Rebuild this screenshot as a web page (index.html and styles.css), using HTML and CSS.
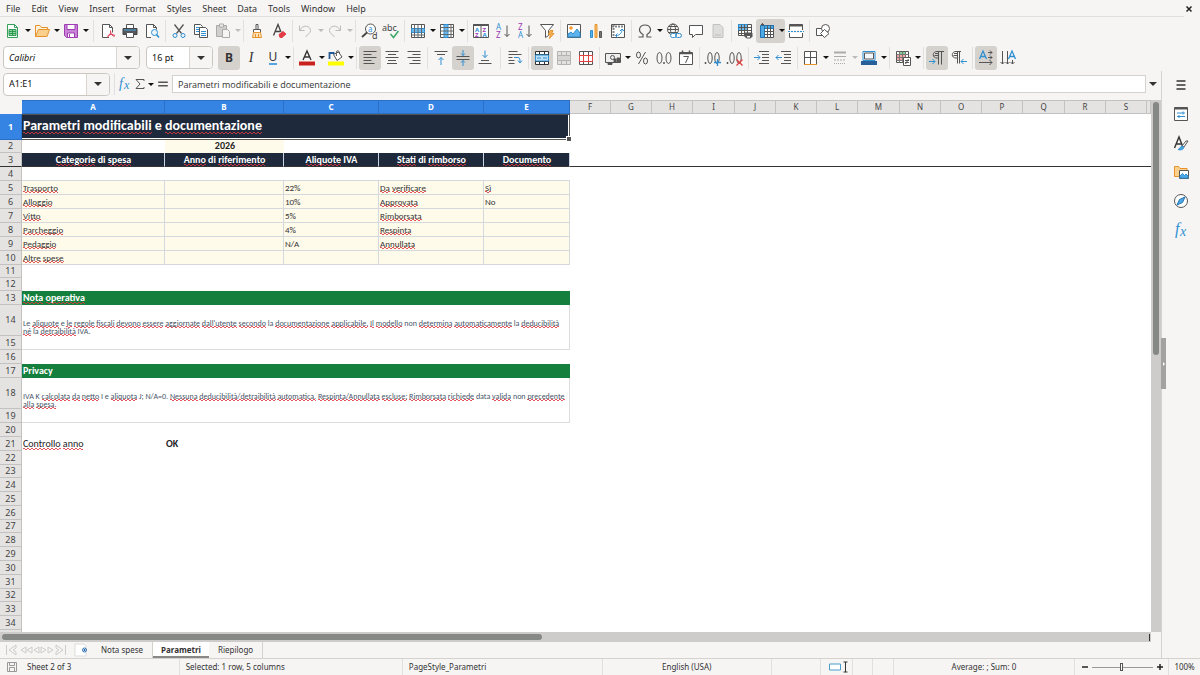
FILE: index.html
```html
<!DOCTYPE html>
<html lang="en">
<head>
<meta charset="utf-8">
<title>Parametri</title>
<link rel="stylesheet" href="styles.css">
</head>
<body>
<header class="menubar">
<nav class="menus"><button>File</button><button>Edit</button><button>View</button><button>Insert</button><button>Format</button><button>Styles</button><button>Sheet</button><button>Data</button><button>Tools</button><button>Window</button><button>Help</button></nav>
<button class="close" aria-label="Close"><svg viewBox="0 0 8 8"><path d="M1.500 1.500l5 5M6.500 1.500l-5 5" stroke="#222" stroke-width="1.500"/></svg></button>
</header>

<div class="toolbar">
<button class="tb" aria-label="New"><svg viewBox="0 0 18 18"><path d="M3.500 2.500h7l3 3v10h-10z" fill="#fff" stroke="#35a05a"/><path d="M10.500 2.500v3h3" stroke="#35a05a"/><path d="M5 7.500h7v6H5zM5 9.500h7M5 11.500h7M8.500 7.500v6" fill="#8fd6a4" stroke="#2f9a52"/></svg></button><button class="dd" aria-label="New options"></button>
<button class="tb" aria-label="Open"><svg viewBox="0 0 18 18"><path d="M2.500 14.500v-11h4.500l1.500 2h6v2.500" fill="#fdf0d8" stroke="#e6932c"/><path d="M2.500 14.500l3-7h11l-2.500 7z" fill="#fbd08c" stroke="#e6932c"/></svg></button><button class="dd" aria-label="Open options"></button>
<button class="tb" aria-label="Save"><svg viewBox="0 0 18 18"><path d="M2.500 2.500h13v13h-11l-2-2z" fill="#c883d6" stroke="#a03db5"/><path d="M5 2.500h8v5H5zM5.500 11h7v4.500h-7z" fill="#fff" stroke="#a03db5"/><path d="M7.500 12v3" stroke="#a03db5"/></svg></button><button class="dd" aria-label="Save options"></button>
<i class="sep wide"></i>
<button class="tb" aria-label="Export as PDF"><svg viewBox="0 0 18 18"><path d="M10 15.500H3.500v-13h7l3 3v5" fill="#fff"/><path d="M10.500 2.500v3h3"/><path d="M8 15.500c3-2 4-4.500 3.500-7M8.500 14c2-2 5-2 7.500-.500M11.500 9c0 3 2 5 4 5.500" stroke="#e0415a"/></svg></button>
<button class="tb" aria-label="Print"><svg viewBox="0 0 18 18"><path d="M5.500 6.500v-4h7v4" fill="#fff"/><path d="M2 6.500h14v6H2z" fill="#53585c" stroke="#444"/><path d="M3 8h12" stroke="#4da3e0"/><path d="M5.500 10.500h7v5h-7z" fill="#fff"/></svg></button>
<button class="tb" aria-label="Print preview"><svg viewBox="0 0 18 18"><path d="M8 15.500H3.500v-13h7l3 3v2" fill="#fff"/><path d="M10.500 2.500v3h3"/><circle cx="11.500" cy="10.500" r="3" fill="#eaf5fc" stroke="#2f8fd3"/><path d="M13.500 12.500l2.500 3" stroke="#2f8fd3" stroke-width="1.500"/></svg></button>
<i class="sep"></i>
<button class="tb" aria-label="Cut"><svg viewBox="0 0 18 18"><path d="M4.500 2.500l7 9M13.500 2.500l-7 9" stroke-width="1.300"/><circle cx="5" cy="13.500" r="2" stroke="#2f8fd3"/><circle cx="13" cy="13.500" r="2" stroke="#2f8fd3"/></svg></button>
<button class="tb" aria-label="Copy"><svg viewBox="0 0 18 18"><path d="M2.500 2.500h6l2 2v8h-8z" fill="#fff"/><path d="M4 5.500h4M4 7.500h3M4 9.500h3" stroke="#2f8fd3"/><path d="M7.500 5.500h6l2 2v8h-8z" fill="#fff"/><path d="M9 9.500h5M9 11.500h5M9 13.500h5" stroke="#2f8fd3"/></svg></button>
<button class="tb off" aria-label="Paste"><svg viewBox="0 0 18 18"><path d="M2.500 3.500h10v11h-10z" fill="#d0cfcd" stroke="#aaa"/><path d="M5.500 2h4v3h-4z" fill="#eee" stroke="#aaa"/><path d="M8.500 7.500h5l2 2v6h-7z" fill="#f5f5f5" stroke="#aaa"/></svg></button><button class="dd off" aria-label="Paste options"></button>
<i class="sep"></i>
<button class="tb" aria-label="Clone formatting"><svg viewBox="0 0 18 18"><path d="M8 2.500h2v5H8zM5.500 7.500h7v3h-7z" fill="#fff"/><path d="M5.500 10.500h7l1 5h-9zM7.500 12v3M10.500 12v3" fill="#fce2b8" stroke="#e6932c"/></svg></button>
<button class="tb" aria-label="Clear formatting"><svg viewBox="0 0 18 18"><path d="M3.500 13.500l4.500-11 3 7.500M5 9.500h5" stroke="#444" stroke-width="1.300"/><path d="M9 12.500l4-3 3 2.500-4 3.500h-2z" fill="#e23c46" stroke="#e23c46"/></svg></button>
<i class="sep"></i>
<button class="tb off" aria-label="Undo"><svg viewBox="0 0 18 18"><path d="M2.500 3.500v5h5M2.500 8.500c4-7 11-4.500 11 0 0 3-3 3.500-5 6.500" stroke="#bbb"/></svg></button><button class="dd off" aria-label="Undo options"></button>
<button class="tb off" aria-label="Redo"><svg viewBox="0 0 18 18"><path d="M14.500 3.500v5h-5M14.500 8.500c-4-7-11-4.500-11 0 0 3 3 3.500 5 6.500" stroke="#bbb"/></svg></button><button class="dd off" aria-label="Redo options"></button>
<i class="sep"></i>
<button class="tb" aria-label="Find and replace"><svg viewBox="0 0 18 18"><circle cx="10.500" cy="7" r="5" fill="#fff"/><path d="M7 10.500l-5 4.500" stroke="#444" stroke-width="1.800"/><text x="8" y="9.500" font-size="8" fill="#2f8fd3">a</text><text x="12" y="17" font-size="9" fill="#444">d</text></svg></button>
<button class="tb" aria-label="Spelling"><svg viewBox="0 0 18 18"><text x="0" y="8.500" font-size="9" fill="#444">abc</text><path d="M8.500 12l3 3.500 5-6.500" stroke="#3aa964" stroke-width="1.500"/></svg></button>
<i class="sep"></i>
<button class="tb" aria-label="Row"><svg viewBox="0 0 18 18"><path d="M2.500 2.500h13v13h-13z" fill="#fff"/><path d="M2.500 6.500h13v4h-13z" fill="#6cb9ed" stroke="#2f8fd3"/><path d="M2.500 13h13M5.500 2.500v13M9 2.500v13M12.500 2.500v13" stroke="#666"/></svg></button><button class="dd" aria-label="Row options"></button>
<button class="tb" aria-label="Column"><svg viewBox="0 0 18 18"><path d="M2.500 2.500h13v13h-13z" fill="#fff"/><path d="M6 2.500h4v13H6z" fill="#6cb9ed" stroke="#2f8fd3"/><path d="M2.500 5.500h13M2.500 9h13M2.500 12.500h13M13 2.500v13" stroke="#666"/></svg></button><button class="dd" aria-label="Column options"></button>
<i class="sep"></i>
<button class="tb" aria-label="Sort"><svg viewBox="0 0 18 18"><path d="M1.500 2.500h15v13h-15zM9 2.500v13" fill="#fff"/><path d="M1.500 3h15" stroke-width="2"/><g font-size="6" font-weight="bold"><text x="3" y="9.500" fill="#2f8fd3">A</text><text x="3" y="15" fill="#9a3bb0">Z</text><text x="10.500" y="9.500" fill="#9a3bb0">Z</text><text x="10.500" y="15" fill="#2f8fd3">A</text></g></svg></button>
<button class="tb" aria-label="Sort ascending"><svg viewBox="0 0 18 18"><g font-size="8"><text x="2" y="8" fill="#2f8fd3">A</text><text x="2" y="16" fill="#9a3bb0">Z</text></g><path d="M13 3.500v11M10.500 12l2.500 2.500L15.500 12"/></svg></button>
<button class="tb" aria-label="Sort descending"><svg viewBox="0 0 18 18"><g font-size="8"><text x="2" y="8" fill="#9a3bb0">Z</text><text x="2" y="16" fill="#2f8fd3">A</text></g><path d="M13 3.500v11M10.500 12l2.500 2.500L15.500 12"/></svg></button>
<button class="tb" aria-label="AutoFilter"><svg viewBox="0 0 18 18"><path d="M2.500 2.500h13l-5 6v5l-3 2v-7z" fill="#fff"/><path d="M12 8.500h3l-1.500 3h2.500l-4.500 5 1-4h-2z" fill="#f9b65a" stroke="#e6932c"/></svg></button>
<i class="sep"></i>
<button class="tb" aria-label="Image"><svg viewBox="0 0 18 18"><path d="M2.500 2.500h13v13h-13z" fill="#fff"/><circle cx="6" cy="6" r="1.300" fill="#f3a03c" stroke="#f3a03c"/><path d="M3 15v-3l3-2 2 2 4-5 3 4v4z" fill="#5fb2ea" stroke="#2f8fd3"/></svg></button>
<button class="tb" aria-label="Chart"><svg viewBox="0 0 18 18"><path d="M3.500 8.500h2v7h-2z" fill="#5fb2ea" stroke="#2f8fd3"/><path d="M8 2.500h2v13H8z" fill="#fbc06a" stroke="#e6932c"/><path d="M12.500 9.500h2v6h-2z" fill="#777"/></svg></button>
<button class="tb" aria-label="Pivot table"><svg viewBox="0 0 18 18"><path d="M2.500 2.500h13v13h-13z" fill="#fff"/><path d="M3 4.500h12M4.500 3v12" stroke="#888" stroke-width="2" stroke-dasharray="2 1"/><path d="M7 13.500c4 0 6-3 6-6M11 9l2-2 2 2M8.500 11.500l-2 2 2 2" stroke="#2f8fd3"/></svg></button>
<i class="sep"></i>
<button class="tb" aria-label="Special character"><svg viewBox="0 0 18 18"><path d="M2.500 15h4.500v-2.500C1 9 3.500 3 9 3s8 6 2 9.500V15h4.500" stroke-width="1.200"/></svg></button><button class="dd" aria-label="Special character options"></button>
<button class="tb" aria-label="Hyperlink"><svg viewBox="0 0 18 18"><circle cx="8" cy="7.500" r="5.500"/><ellipse cx="8" cy="7.500" rx="2.500" ry="5.500"/><path d="M2.500 7.500h11M3.500 4.500h9M3.500 10.500h9"/><rect x="5.500" y="11.500" width="6" height="4" rx="2" fill="#fff" stroke="#2f8fd3"/><rect x="10.500" y="11.500" width="6" height="4" rx="2" stroke="#2f8fd3"/></svg></button>
<button class="tb" aria-label="Comment"><svg viewBox="0 0 18 18"><path d="M2.500 3.500h13v9h-7l-3 3v-3h-3z" fill="#fff"/></svg></button>
<button class="tb off" aria-label="Headers and footers"><svg viewBox="0 0 18 18"><path d="M4 2.500h7l3 3v10H4z" fill="#ddd" stroke="#c3c2c0"/><path d="M6 13h6" stroke="#bbb"/></svg></button>
<i class="sep"></i>
<button class="tb" aria-label="Define print area"><svg viewBox="0 0 18 18"><path d="M2.500 2.500h13v11h-13z" fill="#fff"/><path d="M2.500 2.500h9v6h-9z" fill="#6cb9ed" stroke="#2f8fd3"/><path d="M2.500 5.500h13M2.500 8.500h13M2.500 11.500h13M5.500 2.500v11M8.500 2.500v11M11.500 2.500v11"/><path d="M9 11h7v4H9z" fill="#555"/><path d="M10.500 13.500h4v2.500h-4z" fill="#fff"/></svg></button>
<span class="on"><button class="tb" aria-label="Freeze rows and columns" aria-pressed="true"><svg viewBox="0 0 18 18"><path d="M3.500 3.500h12v12h-12z" fill="#fff"/><path d="M2.500 3.500h4v12h-4zM6.500 3.500h9v3h-9z" fill="#4fa9e6" stroke="#2372ad"/><path d="M6.500 9.500h9M6.500 12.500h9M9.500 3.500v12M12.500 3.500v12M4.500 1v3M3 2.500h3"/></svg></button><button class="dd" aria-label="Freeze options"></button></span>
<button class="tb" aria-label="Split window"><svg viewBox="0 0 18 18"><path d="M2.500 8V2.500h13V8M2.500 11v4.500h13V11" fill="#fff"/><path d="M2.500 3.500h13" stroke-width="2"/><path d="M1 9.500h16" stroke="#2f8fd3" stroke-dasharray="2 1"/></svg></button>
<i class="sep"></i>
<button class="tb" aria-label="Draw functions"><svg viewBox="0 0 18 18"><path d="M2.500 6.500h7v7h-7z" fill="#fff"/><circle cx="11.500" cy="6.500" r="4" fill="#fff"/><path d="M10.500 7.500l4.500 4-4.500 4-4-4z" fill="#fff"/></svg></button>
</div>

<div class="toolbar format">
<div class="combo font"><input type="text" value="Calibri" aria-label="Font name"><button class="drop" aria-label="Font list"></button></div>
<div class="combo size"><input type="text" value="16 pt" aria-label="Font size"><button class="drop" aria-label="Size list"></button></div>
<button class="tb on bold" aria-pressed="true">B</button>
<button class="tb ital">I</button>
<button class="tb und"><span>U</span></button><button class="dd" aria-label="Underline options"></button>
<i class="sep"></i>
<button class="tb" aria-label="Font color"><svg viewBox="0 0 18 18"><path d="M5 11l4-9 4 9M6.500 8h5" stroke="#333" stroke-width="1.400"/><path d="M1 12.500h16v4H1z" fill="#c9211e" stroke="none"/></svg></button><button class="dd" aria-label="Font color options"></button>
<button class="tb" aria-label="Highlighting"><svg viewBox="0 0 18 18"><path d="M6.500 5.500l5-2.500 3.500 5-5 3.500z" fill="#fff"/><path d="M2.500 10V4h5" stroke="#235b94" stroke-width="1.800"/><path d="M9.500 7c-1-6 2-7 3-3"/><path d="M1 12.500h16v4H1z" fill="#ff0" stroke="none"/></svg></button><button class="dd" aria-label="Highlighting options"></button>
<i class="sep"></i>
<button class="tb on" aria-label="Align left" aria-pressed="true"><svg viewBox="0 0 18 18"><path d="M2.500 2.500h13M2.500 5.500h8M2.500 8.500h13M2.500 11.500h8M2.500 14.500h11"/></svg></button>
<button class="tb" aria-label="Align center"><svg viewBox="0 0 18 18"><path d="M2.500 2.500h13M5 5.500h8M2.500 8.500h13M5 11.500h8M4 14.500h10"/></svg></button>
<button class="tb" aria-label="Align right"><svg viewBox="0 0 18 18"><path d="M2.500 2.500h13M7.500 5.500h8M2.500 8.500h13M7.500 11.500h8M4.500 14.500h11"/></svg></button>
<i class="sep"></i>
<button class="tb" aria-label="Align top"><svg viewBox="0 0 18 18"><path d="M2.500 2.500h13M5 5.500h8"/><path d="M9 16V8.500M6.500 11L9 8.500l2.500 2.500" stroke="#2f8fd3"/></svg></button>
<button class="tb on" aria-label="Center vertically" aria-pressed="true"><svg viewBox="0 0 18 18"><path d="M2.500 7.500h13M2.500 10.500h13"/><path d="M9 1v5.500M7 4.500l2 2 2-2M9 17v-5.500M7 13.500l2-2 2 2" stroke="#2f8fd3"/></svg></button>
<button class="tb" aria-label="Align bottom"><svg viewBox="0 0 18 18"><path d="M2.500 14.500h13M5 11.500h8"/><path d="M9 1.500V8.500M6.500 6L9 8.500 11.500 6" stroke="#2f8fd3"/></svg></button>
<i class="sep wide"></i>
<button class="tb" aria-label="Wrap text"><svg viewBox="0 0 18 18"><path d="M2.500 2.500h9M2.500 5.500h13M2.500 8.500h4M2.500 11.500h6M2.500 14.500h6"/><path d="M8 8.500h4c2 0 2 2 2 5M12 11.500l2 2.500 2-2.500" stroke="#2f8fd3"/></svg></button>
<i class="sep"></i>
<button class="tb on" aria-label="Merge and center cells" aria-pressed="true"><svg viewBox="0 0 18 18"><path d="M2.500 2.500h13v13h-13zM6.500 2.500v13M11.500 2.500v13M2.500 12.500h13M2.500 5.500h13" fill="#fff" stroke="#333"/><path d="M2.500 6h13v6h-13z" fill="#bfe1f7" stroke="#2f8fd3"/><path d="M4 9h4M10 9h4" stroke="#2f8fd3"/></svg></button>
<button class="tb off" aria-label="Merge cells"><svg viewBox="0 0 18 18"><path d="M2.500 2.500h13v13h-13zM6.500 2.500v13M11.500 2.500v13" fill="#e2e1df" stroke="#b5b4b2"/><path d="M2.500 6.500h13v5h-13z" fill="#d5d4d2" stroke="#b5b4b2"/></svg></button>
<button class="tb" aria-label="Split cells"><svg viewBox="0 0 18 18"><path d="M2.500 2.500h13v13h-13zM6.500 2.500v13M11.500 2.500v13" fill="#fff"/><path d="M2.500 6.500h13v6h-13zM6.500 6.500v6M11.500 6.500v6" fill="#fff" stroke="#e0413e"/></svg></button>
<i class="sep"></i>
<button class="tb" aria-label="Currency"><svg viewBox="0 0 18 18"><path d="M1.500 4.500h15v9h-15z" fill="#eee"/><circle cx="8.500" cy="8.500" r="2"/><path d="M10 14v-4h2v4M13 14V9h2.500v5M4 13.500v2h4v-2" fill="#555"/></svg></button><button class="dd" aria-label="Currency options"></button>
<button class="tb" aria-label="Percent"><svg viewBox="0 0 18 18"><ellipse cx="5.500" cy="6" rx="2" ry="3"/><ellipse cx="12.500" cy="12" rx="2" ry="3"/><path d="M12.500 3l-7 12"/></svg></button>
<button class="tb" aria-label="Number"><svg viewBox="0 0 18 18"><ellipse cx="4.500" cy="9" rx="2.500" ry="5.500"/><ellipse cx="13.500" cy="9" rx="2.500" ry="5.500"/><path d="M8.500 13.500h1v1h-1z"/></svg></button>
<button class="tb" aria-label="Date"><svg viewBox="0 0 18 18"><path d="M2.500 3.500h13v12h-13z" fill="#fff"/><path d="M2.500 4.500h13M5.500 1.500v3M12.500 1.500v3" stroke-width="1.500"/><path d="M6.500 7.500h5l-3 6.500"/></svg></button>
<i class="sep"></i>
<button class="tb" aria-label="Add decimal place"><svg viewBox="0 0 18 18"><path d="M1 13.500h1v1H1z"/><ellipse cx="6" cy="9" rx="2.200" ry="5.500"/><ellipse cx="13" cy="9" rx="2.200" ry="5.500"/><path d="M13.500 10v7M10 13.500h7" stroke="#2f8fd3" stroke-width="1.300"/></svg></button>
<button class="tb" aria-label="Delete decimal place"><svg viewBox="0 0 18 18"><path d="M1 13.500h1v1H1z"/><ellipse cx="6" cy="9" rx="2.200" ry="5.500"/><ellipse cx="13" cy="9" rx="2.200" ry="5.500"/><path d="M10.500 10.500l6 6M16.500 10.500l-6 6" stroke="#e0413e" stroke-width="1.300"/></svg></button>
<i class="sep"></i>
<button class="tb" aria-label="Increase indent"><svg viewBox="0 0 18 18"><path d="M6 2.500h10M9 5.500h7M9 8.500h7M9 11.500h7M6 14.500h10"/><path d="M1 8.500h6M4.500 6L7 8.500 4.500 11" stroke="#2f8fd3"/></svg></button>
<button class="tb" aria-label="Decrease indent"><svg viewBox="0 0 18 18"><path d="M6 2.500h10M9 5.500h7M9 8.500h7M9 11.500h7M6 14.500h10"/><path d="M1 8.500h6M3.500 6L1 8.500 3.500 11" stroke="#2f8fd3"/></svg></button>
<i class="sep"></i>
<button class="tb" aria-label="Borders"><svg viewBox="0 0 18 18"><path d="M2.500 15.500v-13h12v13M8.500 2.500v13M2.500 8.500h12" fill="#fff"/><path d="M2 15.500h13" stroke="#e6932c"/></svg></button><button class="dd" aria-label="Border options"></button>
<button class="tb off" aria-label="Border style"><svg viewBox="0 0 18 18"><path d="M3 3.500h12" stroke="#aaa" stroke-width="2"/><path d="M3 7.500h12" stroke="#aaa"/><path d="M3 11h12" stroke="#aaa" stroke-dasharray="2 1"/><path d="M3 14.500h12" stroke="#aaa" stroke-dasharray="1 1"/></svg></button><button class="dd off" aria-label="Border style options"></button>
<button class="tb" aria-label="Border color"><svg viewBox="0 0 18 18"><path d="M3 2.500h12v9H3z" fill="#f3f8fc" stroke="#2f8fd3"/><path d="M4.500 4h9v6h-9z"/><path d="M1 12h16v4H1z" fill="#2a6099" stroke="none"/></svg></button><button class="dd" aria-label="Border color options"></button>
<i class="sep"></i>
<button class="tb" aria-label="Conditional formatting"><svg viewBox="0 0 18 18"><path d="M2.500 2.500h12v11h-12z" fill="#fff"/><path d="M6 3h5v3H6z" fill="#7cd194" stroke="none"/><path d="M3 6h8v6H3z" fill="#f3a6a2" stroke="none"/><path d="M2.500 5.500h12M2.500 8.500h12M2.500 11.500h12M5.500 2.500v11M8.500 2.500v11M11.500 2.500v11" stroke="#777"/><path d="M9.500 8.500h7v8h-7z" fill="#fff"/><path d="M11 11.500h4M11 13.500h4M14.500 10l-3 5"/></svg></button><button class="dd" aria-label="Conditional options"></button>
<i class="sep"></i>
<button class="tb on" aria-label="Left-to-right" aria-pressed="true"><svg viewBox="0 0 18 18"><path d="M16 2.500H9c-5 0-5 6.500 0 6.500h1.500M10.500 2.500v13M13.500 2.500v13"/><path d="M7 4.500h3M6.500 6.500H10"/><path d="M1 12.500h6M4.500 10L7 12.500 4.500 15" stroke="#2f8fd3"/></svg></button>
<button class="tb" aria-label="Right-to-left"><svg viewBox="0 0 18 18"><path d="M11 2.500H6c-5 0-5 6.500 0 6.500h1M7.500 2.500v12M9.500 2.500v12"/><path d="M4 4.500h3M3.500 6.500H7"/><path d="M11 12.500h6M13.500 10L11 12.500l2.500 2.500" stroke="#2f8fd3"/></svg></button>
<i class="sep"></i>
<button class="tb on" aria-label="Text left to right" aria-pressed="true"><svg viewBox="0 0 18 18"><path d="M2.500 10L6 2l3.500 8M4 7.500h4" stroke="#2f8fd3" stroke-width="1.300"/><path d="M11 3.500h4M11 8.500h4M2 13.500h13M13 1.500l2 2-2 2M13 6.500l2 2-2 2M12.500 11l2.500 2.500-2.500 2.500"/></svg></button>
<button class="tb" aria-label="Text top to bottom"><svg viewBox="0 0 18 18"><path d="M9.500 10L13 2l3.500 8M11 7.500h4" stroke="#2f8fd3" stroke-width="1.300"/><path d="M3.500 2v13M8.500 2v13M13.500 11v4M1.500 13l2 2 2-2M6.500 13l2 2 2-2M11.500 13l2 2 2-2"/></svg></button>
</div>

<div class="work">
<main class="editor">
<div class="formulabar">
<div class="combo name"><input type="text" value="A1:E1" aria-label="Name box"><button class="drop" aria-label="Name list"></button></div>
<i class="sep"></i>
<button class="fx" aria-label="Function wizard"><svg viewBox="0 0 14 14"><text x="1" y="11" font-size="14" class="fxt">f</text><text x="6" y="12" font-size="12" class="fxt">x</text></svg></button>
<button class="sigma" aria-label="Select function"><svg viewBox="0 0 12 12"><path d="M10 3V1.500H2l4 4.500-4 4.500h8V9"/></svg></button><button class="dd" aria-label="Function list"></button>
<button class="equals" aria-label="Formula"><svg viewBox="0 0 10 10"><path d="M1 3.500h8M1 6.500h8" stroke-width="1.300"/></svg></button>
<input class="formula" type="text" value="Parametri modificabili e documentazione" aria-label="Formula input">
<button class="drop plain" aria-label="Expand formula bar"></button>
</div>

<div class="gridarea">
<div class="sheet">
<table>
<colgroup><col class="c-row"><col class="c-a"><col class="c-b"><col class="c-c"><col class="c-d"><col class="c-e"><col class="n"><col class="n"><col class="n"><col class="n1"><col class="n"><col class="n"><col class="n"><col class="n1"><col class="n"><col class="n"><col class="n"><col class="n1"><col class="n"><col class="n"><col></colgroup>
<thead><tr><td class="corner"></td><th class="sel">A</th><th class="sel">B</th><th class="sel">C</th><th class="sel">D</th><th class="sel">E</th><th>F</th><th>G</th><th>H</th><th>I</th><th>J</th><th>K</th><th>L</th><th>M</th><th>N</th><th>O</th><th>P</th><th>Q</th><th>R</th><th>S</th><th></th></tr></thead>
<tbody>
<tr class="title-row"><th class="sel">1</th><td class="title" colspan="5"><span class="sp">Parametri</span> <span class="sp">modificabili</span> e <span class="sp">documentazione</span></td><td colspan="15"></td></tr>
<tr class="s"><th>2</th><td></td><td class="year">2026</td><td></td><td></td><td></td><td colspan="15"></td></tr>
<tr class="frozen"><th>3</th><td class="hd"><span class="sp">Categorie</span> di <span class="sp">spesa</span></td><td class="hd"><span class="sp">Anno</span> di <span class="sp">riferimento</span></td><td class="hd"><span class="sp">Aliquote</span> IVA</td><td class="hd"><span class="sp">Stati</span> di <span class="sp">rimborso</span></td><td class="hd"><span class="sp">Documento</span></td><td colspan="15"></td></tr>
<tr class="pre"><th>4</th><td></td><td></td><td></td><td></td><td></td><td colspan="15"></td></tr>
<tr><th>5</th><td class="in"><span class="sp">Trasporto</span></td><td class="in"></td><td class="in">22%</td><td class="in"><span class="sp">Da</span> <span class="sp">verificare</span></td><td class="in"><span class="sp">Sì</span></td><td colspan="15"></td></tr>
<tr><th>6</th><td class="in"><span class="sp">Alloggio</span></td><td class="in"></td><td class="in">10%</td><td class="in"><span class="sp">Approvata</span></td><td class="in">No</td><td colspan="15"></td></tr>
<tr><th>7</th><td class="in"><span class="sp">Vitto</span></td><td class="in"></td><td class="in">5%</td><td class="in"><span class="sp">Rimborsata</span></td><td class="in"></td><td colspan="15"></td></tr>
<tr><th>8</th><td class="in"><span class="sp">Parcheggio</span></td><td class="in"></td><td class="in">4%</td><td class="in"><span class="sp">Respinta</span></td><td class="in"></td><td colspan="15"></td></tr>
<tr><th>9</th><td class="in"><span class="sp">Pedaggio</span></td><td class="in"></td><td class="in">N/A</td><td class="in"><span class="sp">Annullata</span></td><td class="in"></td><td colspan="15"></td></tr>
<tr><th>10</th><td class="in"><span class="sp">Altre</span> <span class="sp">spese</span></td><td class="in"></td><td class="in"></td><td class="in"></td><td class="in"></td><td colspan="15"></td></tr>
<tr class="s"><th>11</th><td colspan="20"></td></tr>
<tr class="s"><th>12</th><td colspan="20"></td></tr>
<tr><th>13</th><td class="band" colspan="5"><span class="sp">Nota</span> <span class="sp">operativa</span></td><td colspan="15"></td></tr>
<tr class="tall"><th>14</th><td class="note" colspan="5" rowspan="2">Le <span class="sp">aliquote</span> e <span class="sp">le</span> <span class="sp">regole</span> <span class="sp">fiscali</span> <span class="sp">devono</span> <span class="sp">essere</span> <span class="sp">aggiornate</span> <span class="sp">dall'utente</span> <span class="sp">secondo</span> la <span class="sp">documentazione</span> <span class="sp">applicabile.</span> <span class="sp">Il</span> <span class="sp">modello</span> non <span class="sp">determina</span> <span class="sp">automaticamente</span> la <span class="sp">deducibilità</span><br><span class="sp">né</span> la <span class="sp">detraibilità</span> IVA.</td><td colspan="15"></td></tr>
<tr><th>15</th><td colspan="15"></td></tr>
<tr><th>16</th><td colspan="20"></td></tr>
<tr><th>17</th><td class="band" colspan="5">Privacy</td><td colspan="15"></td></tr>
<tr class="tall"><th>18</th><td class="note" colspan="5" rowspan="2">IVA K <span class="sp">calcolata</span> <span class="sp">da</span> <span class="sp">netto</span> I e <span class="sp">aliquota</span> J; N/A=0. <span class="sp">Nessuna</span> <span class="sp">deducibilità/detraibilità</span> <span class="sp">automatica.</span> <span class="sp">Respinta/Annullata</span> <span class="sp">escluse;</span> <span class="sp">Rimborsata</span> <span class="sp">richiede</span> data <span class="sp">valida</span> non <span class="sp">precedente</span><br><span class="sp">alla</span> <span class="sp">spesa.</span></td><td colspan="15"></td></tr>
<tr><th>19</th><td colspan="15"></td></tr>
<tr><th>20</th><td colspan="20"></td></tr>
<tr><th>21</th><td class="check"><span class="sp">Controllo</span> <span class="sp">anno</span></td><td class="check strong">OK</td><td colspan="18"></td></tr>
<tr><th>22</th><td colspan="20"></td></tr>
<tr class="s"><th>23</th><td colspan="20"></td></tr>
<tr><th>24</th><td colspan="20"></td></tr>
<tr><th>25</th><td colspan="20"></td></tr>
<tr><th>26</th><td colspan="20"></td></tr>
<tr class="s"><th>27</th><td colspan="20"></td></tr>
<tr><th>28</th><td colspan="20"></td></tr>
<tr><th>29</th><td colspan="20"></td></tr>
<tr><th>30</th><td colspan="20"></td></tr>
<tr><th>31</th><td colspan="20"></td></tr>
<tr class="s"><th>32</th><td colspan="20"></td></tr>
<tr><th>33</th><td colspan="20"></td></tr>
<tr><th>34</th><td colspan="20"></td></tr>
<tr><th></th><td colspan="20"></td></tr>
</tbody>
</table>
</div>
<div class="vscroll"><div class="thumb"></div></div>
</div>
<div class="hscroll"><div class="thumb"></div><i></i></div>
<div class="tabs">
<button class="navs" aria-label="Sheet navigation"><svg viewBox="0 0 64 12"><path d="M2.500 1v10M12 1L5 6l7 5V8L9 6l3-2zM22 3l-5 3 5 3zM28 3l-5 3 5 3zM35 3l-5 3 5 3zM37 3l5 3-5 3zM44 3l5 3-5 3zM52 1l7 5-7 5V8l3-2-3-2zM61.500 1v10" stroke="#ccc"/></svg></button>
<button class="add" aria-label="Add sheet"><svg viewBox="0 0 14 14"><path d="M1 1h9l2 2v10H1z" fill="#fff" stroke="#ddd"/><circle cx="10.500" cy="7" r="2" stroke="#2f6fb3"/><path d="M10.500 6v2M9.500 7h2" stroke="#2f6fb3"/></svg></button>
<button class="tab">Nota spese</button><button class="tab current">Parametri</button><button class="tab last">Riepilogo</button>
</div>
</main>
<aside class="sidebar">
<button class="grip" aria-label="Collapse sidebar"></button>
<button aria-label="Sidebar settings"><svg viewBox="0 0 16 16"><path d="M3.500 4h9M3.500 8h9M3.500 12h9" stroke="#333" stroke-width="1.300"/></svg></button>
<button aria-label="Properties"><svg viewBox="0 0 16 16"><path d="M1.500 1.500h13v13h-13z" fill="#fff"/><path d="M1.500 2.500h13" stroke-width="2"/><path d="M4 7h8M10 5.500v3M4 10.500h8M6 9v3" stroke="#2f8fd3"/></svg></button>
<button aria-label="Styles"><svg viewBox="0 0 16 16"><path d="M1.500 13L6 2l3.500 9M3 9h6" stroke="#333" stroke-width="1.400"/><path d="M9 11l4-5h2l-4 6z" fill="#fff"/><path d="M5 14.500c2 0 2-3 4-3.500l2 1.500c-1 2-3 3-6 2z" fill="#4fa9e6" stroke="#2f8fd3"/></svg></button>
<button aria-label="Gallery"><svg viewBox="0 0 16 16"><path d="M1.500 12.500v-10h4l1.500 2h7v8z" fill="#fbd08c" stroke="#e6932c"/><path d="M6.500 6.500h9v8h-9z" fill="#fff"/><path d="M7 14v-2l2.500-2.500 2 2L13 10l2 2v2z" fill="#4fa9e6" stroke="#2f8fd3"/></svg></button>
<button aria-label="Navigator"><svg viewBox="0 0 16 16"><circle cx="8" cy="8" r="6.500" fill="#fff"/><path d="M12 4l-2.500 5.500L4 12l2.500-5.500z" fill="#4fa9e6" stroke="#2372ad"/></svg></button>
<button aria-label="Functions"><svg viewBox="0 0 16 16"><text x="2" y="12" font-size="16" class="fxt">f</text><text x="7" y="14" font-size="14" class="fxt">x</text></svg></button>
</aside>
</div>

<footer class="status">
<div class="f-sheet"><svg viewBox="0 0 12 12"><path d="M1.500 1.500h9v9h-9zM3.500 1.500v3h5v-3M3.500 10.500v-4h5v4" stroke="#999"/></svg><span>Sheet 2 of 3</span></div>
<div class="f-sel">Selected: 1 row, 5 columns</div>
<div class="f-page">PageStyle_Parametri</div>
<div class="f-lang">English (USA)</div>
<div class="f-ins"></div>
<div class="f-mode"><svg viewBox="0 0 20 14"><path d="M.500 4h11v6H.500z" fill="#fff" stroke="#4a9fcc"/><path d="M14.500 2h4M14.500 12h4M16.500 2v10" stroke="#333"/></svg></div>
<div class="f-blank"></div><div class="f-blank"></div>
<div class="f-sum">Average: ; Sum: 0</div>
<div class="f-zoom"><button aria-label="Zoom out"><svg viewBox="0 0 8 8"><path d="M1 4h6" stroke="#222" stroke-width="1.500"/></svg></button><input type="range" min="0" max="100" value="48" aria-label="Zoom"><button aria-label="Zoom in"><svg viewBox="0 0 8 8"><path d="M1 4h6M4 1v6" stroke="#222" stroke-width="1.500"/></svg></button></div>
<div class="f-pct">100%</div>
</footer>
</body>
</html>
```
FILE: styles.css
```css
* { box-sizing: border-box; }
html, body { height: 100%; }
body {
  margin: 0;
  display: flex;
  flex-direction: column;
  overflow: hidden;
  background: #f6f5f4;
  color: #333;
  font-family: "Noto Sans", "Open Sans", sans-serif;
  font-size: 9px;
  line-height: 12px;
}
button, input { font: inherit; color: inherit; margin: 0; padding: 0; border: 0; background: none; }
button { display: flex; align-items: center; justify-content: center; flex: none; }
svg { display: block; fill: none; stroke: #555; stroke-width: 1; overflow: visible; }
svg text { stroke: none; }
.fxt { fill: #2f8fd3; font-family: "Liberation Serif", serif; font-style: italic; }

.menubar { display: flex; justify-content: space-between; height: 17px; flex: none; position: relative; }
.menubar::after { content: ""; position: absolute; left: 0; right: 16px; bottom: 0; height: 1px; background: #e0dfde; }
.menus { display: flex; gap: 11px; padding-left: 6px; }
.close { width: 22px; height: 17px; }
.close svg { width: 8px; height: 8px; }

.toolbar { display: flex; align-items: center; flex: none; height: 27px; padding-left: 2px; }
.toolbar.format { padding-left: 3px; }
.tb { width: 22px; height: 24px; border-radius: 3px; }
.tb svg { width: 18px; height: 18px; }
.on { background: #d5d1cd; border-radius: 3px; display: flex; }
.dd { width: 7px; height: 24px; }
.dd::before { content: ""; border: 3px solid transparent; border-top-color: #111; border-bottom: 0; }
.dd.off::before { border-top-color: #bbb; }
.sep { width: 5px; height: 22px; flex: none; display: flex; justify-content: center; }
.sep::before { content: ""; width: 1px; background: #e2e0de; }
.sep.wide { width: 8px; }
.bold { font-weight: bold; font-size: 12px; }
.ital { font-family: "Liberation Serif", serif; font-style: italic; font-size: 14px; }
.und { font-size: 12px; }
.und span { border-bottom: 2px solid #5aa5e0; line-height: 12px; }

.combo { display: flex; height: 23px; background: #fff; border: 1px solid #cdc7c2; border-radius: 4px; overflow: hidden; flex: none; }
.combo input { flex: 1; min-width: 0; padding-left: 5px; font-size: 9px; color: #111; }
.drop { width: 23px; background: #f6f5f4; border-left: 1px solid #d9d5d1; }
.drop::before { content: ""; border: 4px solid transparent; border-top-color: #333; border-bottom: 0; }
.font { width: 137px; margin-right: 6px; }
.font input { font-style: italic; }
.size { width: 67px; margin-right: 5px; }
.name { width: 107px; }

.work { flex: 1; display: flex; min-height: 0; }
.editor { flex: 1; min-width: 0; display: flex; flex-direction: column; }
.formulabar { display: flex; align-items: center; flex: none; height: 29px; padding: 0 1px 3px 3px; }
.formulabar .sep { width: 8px; }
.fx { width: 14px; height: 20px; }
.fx svg { width: 14px; height: 14px; }
.sigma { width: 15px; height: 20px; }
.sigma svg, .equals svg { width: 12px; height: 12px; }
.equals { width: 18px; height: 20px; }
.formula { flex: 1; min-width: 0; height: 18px; padding-left: 5px; background: #fff; border: 1px solid #d5d1cd; font-family: "Open Sans", sans-serif; }
.drop.plain { width: 14px; border: 0; }

.gridarea { flex: 1; min-height: 0; display: flex; }
.sheet { flex: 1; min-width: 0; overflow: hidden; background: #fff; }
table { width: 100%; table-layout: fixed; border-collapse: separate; border-spacing: 0; }
.c-row { width: 22px; }
.c-a { width: 143px; }
.c-b { width: 119px; }
.c-c { width: 95px; }
.c-d { width: 105px; }
.c-e { width: 86px; }
.n { width: 41px; }
.n1 { width: 42px; }
tr { height: 14px; }
tr.s { height: 13px; }
tr.title-row { height: 26px; }
tr.tall { height: 31px; }
td, th { padding: 0; line-height: 12px; white-space: nowrap; overflow: hidden; }
th { font-weight: normal; background: #e4e3e2; color: #444; border-right: 1px solid #c3c2c1; border-bottom: 1px solid #c3c2c1; }
thead th { border-top: 1px solid #c3c2c1; font-size: 8px; }
.corner { background: #f6f5f4; }
th.sel { background: #3584e4; color: #fff; font-weight: bold; border-color: #2a6fc4; }
td { font-family: Carlito, Calibri, Lato, sans-serif; font-size: 9px; color: #333; padding-left: 1px; }
.sp { background: url("data:image/svg+xml,%3Csvg xmlns='http://www.w3.org/2000/svg' width='4' height='2'%3E%3Cpath d='M0 0h2v1H0zM2 1h2v1H2z' fill='%23e0383f' fill-opacity='.85'/%3E%3C/svg%3E") left bottom / 4px 2px repeat-x; }
td.title { position: relative; overflow: visible; background: #1e293b; color: #fff; font-weight: bold; font-size: 14px; line-height: 20px; padding-bottom: 2px; border: 1px solid #555; border-left: 0; box-shadow: inset -1px -1px #fff; }
.title::after { content: ""; position: absolute; right: -2px; bottom: -2px; width: 4px; height: 4px; background: #555; border: 1px solid #fff; border-width: 1px 0 0 1px; }
.year { background: #fffbeb; color: #222; font-weight: bold; font-size: 10px; line-height: 10px; padding-bottom: 2px; text-align: center; }
.hd { background: #1e293b; color: #fff; font-weight: bold; font-size: 10px; text-align: center; border-right: 1px solid #cbd5e1; }
.frozen th, .frozen td { border-bottom: 1px solid #333; }
.in { background: #fffbeb; border-right: 1px solid #d5d9dd; border-bottom: 1px solid #d5d9dd; }
.pre td:not(:last-child) { border-bottom: 1px solid #d5d9dd; }
.band { background: #15803d; color: #fff; font-weight: bold; font-size: 10px; }
.note { font-size: 8px; color: #475569; line-height: 8px; vertical-align: middle; border-right: 1px solid #ddd; border-bottom: 1px solid #ddd; }
.check { font-size: 10px; color: #222; }
.strong { font-weight: bold; }

.vscroll { width: 10px; background: #cdcccb; padding: 2px; flex: none; }
.vscroll .thumb { width: 6px; height: 48%; border-radius: 3px; background: #868885; }
.hscroll { display: flex; justify-content: space-between; align-items: center; flex: none; height: 10px; margin-right: 10px; padding: 0 1px 0 2px; background: #cdcccb; }
.hscroll .thumb { width: 47%; height: 6px; border-radius: 3px; background: #868885; }
.hscroll i { width: 1px; height: 7px; background: #333; }
.tabs { display: flex; align-items: stretch; flex: none; height: 16px; padding-left: 4px; font-size: 8px; }
.navs svg { width: 64px; height: 12px; }
.add { width: 24px; padding-left: 6px; justify-content: flex-start; }
.add svg { width: 14px; height: 14px; }
.tab { padding: 0 9px; border-right: 1px solid #d5d1cd; }
.tab.current { padding: 0 8px; background: #fff; font-weight: bold; border-right: 0; box-shadow: inset 0 -2px #888; }

.sidebar { position: relative; width: 39px; flex: none; display: flex; flex-direction: column; align-items: center; gap: 13px; padding-top: 6px; border-left: 1px solid #d5d1cd; }
.sidebar svg { width: 16px; height: 16px; }
.grip { position: absolute; left: -1px; top: 267px; width: 5px; height: 51px; background: #a3a2a0; }
.grip::before { content: ""; border: 2px solid transparent; border-left-color: #fff; border-right: 0; }

.status { display: flex; flex: none; height: 17px; border-top: 1px solid #d5d1cd; font-size: 8px; }
.status > div { display: flex; align-items: center; border-right: 1px solid #e2e0de; min-width: 0; white-space: nowrap; }
.f-sheet { flex: 179; gap: 9px; padding-left: 6px; }
.f-sheet svg { width: 12px; height: 12px; }
.f-sel { flex: 224; padding-left: 6px; }
.f-page { flex: 200; padding-left: 6px; }
.f-lang { flex: 174; justify-content: center; }
.f-ins { flex: 50; }
.f-mode { flex: 24; padding-left: 8px; }
.f-mode svg { width: 20px; height: 14px; }
.f-blank { flex: 20; }
.f-sum { flex: 187; justify-content: center; }
.f-zoom { flex: 86; padding: 0 4px 0 6px; gap: 3px; }
.f-zoom svg { width: 8px; height: 8px; }
.f-zoom input { -webkit-appearance: none; appearance: none; flex: 1; min-width: 0; height: 10px; background: linear-gradient(#999, #999) center / 100% 1px no-repeat; }
.f-zoom input::-webkit-slider-thumb { -webkit-appearance: none; width: 3px; height: 8px; background: #fff; border: 1px solid #555; }
.status .f-pct { flex: 32; justify-content: center; border-right: 0; }
```
